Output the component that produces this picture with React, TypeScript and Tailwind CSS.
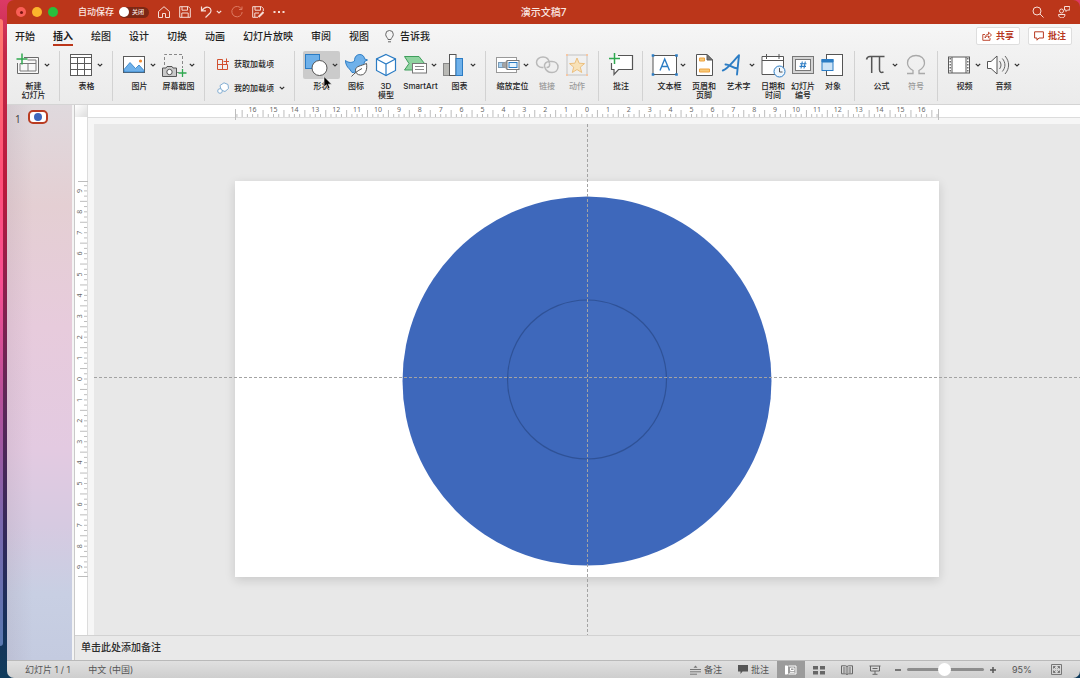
import React from "react";

type Kids = { children: React.ReactNode };

const FONT =
  "font-['Inter','Noto_Sans_CJK_SC',sans-serif]";

function Glyph({ children }: Kids) {
  return (
    <svg viewBox="0 0 22 22" className="size-[22px] shrink-0 overflow-visible" fill="none" stroke="#5a5a5a" strokeWidth="1" aria-hidden="true">
      {children}
    </svg>
  );
}

function Caret({ className = "text-[#333]" }: { className?: string }) {
  return (
    <svg viewBox="0 0 6 4" className={`h-1 w-1.5 shrink-0 ${className}`} fill="none" stroke="currentColor" strokeWidth="1.2" aria-hidden="true">
      <path d="M0.8 0.8 3 3 5.2 0.8" />
    </svg>
  );
}

const GREEN = "#2fa84f";
const BLUE = "#2b7cc4";
const SKY = "#6fb1ea";
const ORANGE = "#f0a340";

const icons = {
  newSlide: (
    <Glyph>
      <path d="M7 3.500H21.500V19.500H.5V9" fill="#f8f8f8" stroke="#6a6a6a" />
      <path d="M3 9.500V17H19V6H10.500M3 9.500H19M11 9.500V17" stroke="#7a7a7a" />
      <path d="M-.5 5H10.500M5 -.5V10.500" stroke={GREEN} strokeWidth="1.500" />
    </Glyph>
  ),
  table: (
    <Glyph>
      <rect x=".5" y=".5" width="21" height="21" fill="#fff" />
      <path d="M.5 3.500h21M.5 9.500h21M.5 15.500h21M7.500 3.500v18M14.500 3.500v18" />
    </Glyph>
  ),
  picture: (
    <Glyph>
      <rect x=".5" y="2.500" width="21" height="16" fill="#fff" />
      <path d="M1 15.500 7 8.500 12.500 14.500 16 11 21 16.500V18H1Z" fill={SKY} stroke={BLUE} strokeWidth=".8" />
      <circle cx="17.500" cy="7" r="1.600" fill="#f08a30" stroke="none" />
    </Glyph>
  ),
  screenshot: (
    <Glyph>
      <path d="M2.500 11V.5h18V14M15 18.500h2" stroke="#888" strokeDasharray="3 2" />
      <path d="M.5 14H4l1-1.500h5l1 1.500h3.500v8.500H.5Z" fill="#c9c9c9" stroke="#555" />
      <circle cx="7.500" cy="18" r="2.700" fill="#fff" stroke="#555" />
      <path d="M16.500 19h8M20.500 15v8" stroke={GREEN} strokeWidth="1.300" />
    </Glyph>
  ),
  shapes: (
    <Glyph>
      <rect x=".5" y=".5" width="14" height="14" fill={SKY} stroke={BLUE} />
      <circle cx="14.500" cy="14" r="7.500" fill="#fff" stroke="#555" />
    </Glyph>
  ),
  iconSet: (
    <Glyph>
      <path d="M.5 6.500C3.500 9 7 9 9.500 7 9.500 2.500 12 .5 14.800.5c2.700 0 4.700 2 4.700 4.300L22.500 6 19.500 7.500C19 13.500 14 18.500 7 18.500L4.500 15C2 13 .5 10 .5 6.500Z" fill={SKY} stroke={BLUE} />
      <path d="M21.500 9.500c1 6-1 11.500-6 11.500-3 0-5-2-5-4.800 0-4.200 5.500-4.200 11-6.700Z" fill="#fff" stroke="#555" />
      <path d="M6.500 22.500C9.500 19 12.500 17 17 14.500" stroke="#555" />
    </Glyph>
  ),
  model: (
    <Glyph>
      <path d="M11 .5 20.500 5v11.500L11 21.500 1.500 16.500V5Z" fill="#fff" stroke={BLUE} strokeWidth="1.200" />
      <path d="M1.500 5 11 10l9.500-5M11 10v11.500" stroke={BLUE} strokeWidth="1.200" />
    </Glyph>
  ),
  smartArt: (
    <Glyph>
      <path d="M.5 2.500H15l5.500 7-5.500 6.500H.5L5 9.500Z" fill="#8fd3a0" stroke="#3f9e5c" />
      <rect x="8.500" y="9.500" width="14" height="9.500" fill="#fff" stroke="#777" />
      <path d="M11 12.500h9M11 15.500h9" stroke="#888" />
    </Glyph>
  ),
  chart: (
    <Glyph>
      <rect x=".5" y="9.500" width="6" height="12" fill="#b9b9b5" stroke="#888" />
      <rect x="6.500" y=".5" width="6.500" height="21" fill="#fff" stroke="#555" />
      <rect x="13" y="4.500" width="6.500" height="17" fill={SKY} stroke={BLUE} />
    </Glyph>
  ),
  zoomTo: (
    <Glyph>
      <rect x=".5" y="3.500" width="20" height="15" fill="#fff" stroke="#999" />
      <rect x="2.500" y="8.500" width="6" height="5" fill="#a9d2f2" stroke="#7a9ab5" />
      <path d="M6.500 9.500 11 7.500v7L6.500 12.500Z" fill="#a5a5a5" stroke="#999" />
      <rect x="11" y="6.500" width="12" height="9" fill="#fff" stroke="#777" />
      <rect x="13" y="8.500" width="8" height="5" fill="#e6f3fc" stroke={BLUE} />
    </Glyph>
  ),
  link: (
    <Glyph>
      <path d="M13.500 9.500C13 5 10.500 3 7 3 3 3 .5 5.500.5 8.300c0 3 2.500 5.200 5.500 5.200h1.500" stroke="#b9b9b9" strokeWidth="1.500" />
      <path d="M8.500 12.500c-.5-3 2-5 5-5h2.500c3.500 0 6 2.400 6 5.500s-2.500 5.500-6 5.500c-3 0-6-1-7.500-6ZM13.500 9.500c.5 2.500-.5 4-3 4" stroke="#b9b9b9" strokeWidth="1.500" />
    </Glyph>
  ),
  action: (
    <Glyph>
      <rect x="1" y="1" width="20" height="20" stroke="#c4c4c4" />
      <path d="M11 4l2.100 5.200 5.400.4-4.200 3.500 1.400 5.400-4.700-3-4.700 3 1.400-5.400-4.200-3.500 5.400-.4Z" fill="#f8e2b8" stroke="#ecc07f" />
      <path d="M0 0h2v2H0ZM20 0h2v2h-2ZM0 20h2v2H0ZM20 20h2v2h-2Z" fill="#f5c7a5" stroke="none" />
    </Glyph>
  ),
  comment: (
    <Glyph>
      <path d="M4 1.500H22.500V15.500H8L3.500 20.500V15.500H1.500V7" fill="#fff" stroke="none" />
      <path d="M8 1.500H22.500V15.500H8.500L4 20.500V15.500H1.500V9" stroke="#555" strokeWidth="1.200" />
      <path d="M-1 4.500H10M4.500 -1V10" stroke={GREEN} strokeWidth="1.500" />
    </Glyph>
  ),
  textBox: (
    <Glyph>
      <rect x="0" y="1.500" width="23.500" height="19" fill="#fff" stroke="#555" />
      <path d="M7 16.500 11.700 5 16.500 16.500M8.700 12.500h6" stroke={BLUE} strokeWidth="1.400" />
      <path d="M-1.300.2h2.600v2.600h-2.600ZM22.200.2h2.600v2.600h-2.600ZM-1.300 19.200h2.600v2.600h-2.600ZM22.200 19.200h2.600v2.600h-2.600Z" fill={BLUE} stroke="none" />
    </Glyph>
  ),
  headerFooter: (
    <Glyph>
      <path d="M3.500.5H14L19.500 6V21.500h-16Z" fill="#fff" stroke="#555" />
      <path d="M14 .5V6h5.500Z" fill="#777" />
      <path d="M6.500 4h5v3h-5ZM6.500 15h10v3h-10Z" fill="#f6c978" stroke={ORANGE} />
    </Glyph>
  ),
  wordArt: (
    <Glyph>
      <path d="M.8 16.500C5 15.500 10 8.500 17 1.200L15 20.500M3.500 10.500C6.500 10 10 13.500 15.500 14.500" stroke={BLUE} strokeWidth="1.900" strokeLinecap="round" strokeLinejoin="round" />
    </Glyph>
  ),
  date: (
    <Glyph>
      <path d="M0 2.500H21.500V20.500H0Z" fill="#fff" stroke="#555" />
      <path d="M0 6.500H21.500M4.500 0V5M17 0V5" stroke="#555" />
      <circle cx="17.500" cy="17.500" r="5.500" fill="#eef6fd" stroke={BLUE} />
      <path d="M17.500 14v4h3" stroke="#555" />
    </Glyph>
  ),
  number: (
    <Glyph>
      <rect x=".5" y="2.500" width="21" height="17" fill="#d4d4d4" stroke="#777" />
      <rect x="3.500" y="5.500" width="15" height="11" fill="#fff" stroke="#777" />
      <path d="M10.300 7.500 9 14.500M13.300 7.500 12 14.500M8 9.700h6.500M7.500 12.400H14" stroke={BLUE} strokeWidth="1.100" />
    </Glyph>
  ),
  object: (
    <Glyph>
      <rect x="4.500" y=".5" width="16" height="21" fill="#fff" stroke="#555" />
      <rect x="0" y="5.500" width="11" height="11" fill="#cde4f7" stroke={BLUE} />
      <path d="M0 5.500h11V8H0Z" fill={BLUE} stroke={BLUE} />
    </Glyph>
  ),
  equation: (
    <Glyph>
      <path d="M1.500 5.500C2 3 3 2.500 5 2.500H19.500M6.700 2.500V19M14.500 2.500V15.500c0 2.500 1.500 3.500 4 2.500" stroke="#555" strokeWidth="1.500" />
    </Glyph>
  ),
  symbol: (
    <Glyph>
      <path d="M2 19.500H8V16.500C4.500 14.500 2.500 12 2.500 9 2.500 4.500 6 1.500 11 1.500S19.500 4.500 19.500 9c0 3-2 5.500-5.500 7.500v3h6" stroke="#a9a9a9" strokeWidth="1.300" />
    </Glyph>
  ),
  video: (
    <Glyph>
      <rect x=".5" y="3" width="21" height="16" fill="#fff" />
      <path d="M4 3v16M18 3v16" />
      <path d="M2.200 4v14M19.800 4v14" strokeDasharray="1.500 1.500" strokeWidth="1.300" />
    </Glyph>
  ),
  audio: (
    <Glyph>
      <path d="M.5 7.500H4L10 2V20L4 14.500H.5Z" fill="#fff" stroke="#555" />
      <path d="M12.500 7c2 2.500 2 5.500 0 8M15.300 4.500c3.500 4 3.500 9 0 13M18 2c4.800 5.500 4.800 12.500 0 18" stroke="#666" />
    </Glyph>
  ),
};

type ToolProps = {
  icon: React.ReactNode;
  lines: string[];
  menu?: boolean;
  muted?: boolean;
  active?: boolean;
  children?: React.ReactNode;
};

function Tool({ icon, lines, menu, muted, active, children }: ToolProps) {
  return (
    <button
      type="button"
      disabled={muted}
      className={`relative flex shrink-0 flex-col items-center pt-[3px] ${menu ? "w-[39px]" : "w-[30px]"} ${muted ? "text-[#9b9b9b]" : "text-[#222]"}`}
    >
      <span className={`flex h-7 items-center gap-[5px] rounded-[2px] ${active ? "bg-[#cbcbcb] px-0.5" : ""}`}>
        {icon}
        {menu && <Caret />}
      </span>
      <span className="mt-[3px] text-[8px] leading-[9px] font-medium whitespace-nowrap">
        {lines.map((line) => (
          <span key={line} className="block">{line}</span>
        ))}
      </span>
      {children}
    </button>
  );
}

function Group({ children }: Kids) {
  return (
    <div className="flex shrink-0 pl-[7px]">
      {children}
      <span className="my-[3px] ml-[6px] w-px bg-[#d2d2d2]" />
    </div>
  );
}

function AddIns() {
  return (
    <div className="flex w-[90px] shrink-0 text-[8px] font-medium whitespace-nowrap text-[#222]">
      <div className="flex flex-1 flex-col gap-2 pt-2 pl-3">
        <button type="button" className="flex h-4 items-center gap-[5px]">
          <svg viewBox="0 0 12 12" className="size-3" fill="none" stroke="#d2502f" aria-hidden="true">
            <path d="M5.500 1.500H.5V11.500H10.500V6.500M.5 6.500H10.500M5.500 1.500V11.500M6.500 3.500H12M9.500.5V6.500" />
          </svg>
          获取加载项
        </button>
        <button type="button" className="flex h-4 items-center gap-[5px]">
          <svg viewBox="0 0 12 12" className="size-3" fill="#fff" stroke="#82add2" aria-hidden="true">
            <path d="M7 .8 11 2.500 11.500 6.500 8 9.500 4 8 3 3.500Z" />
            <circle cx="3" cy="9" r="2.300" />
          </svg>
          我的加载项
          <Caret />
        </button>
      </div>
      <span className="my-[3px] w-px bg-[#d2d2d2]" />
    </div>
  );
}

function Ribbon() {
  return (
    <div className="flex h-[57px] items-stretch border-b border-[#d4d4d4] bg-linear-to-b from-[#f2f2f2] to-[#ebebeb]">
      <Group>
        <Tool icon={icons.newSlide} lines={["新建", "幻灯片"]} menu />
      </Group>
      <Group>
        <Tool icon={icons.table} lines={["表格"]} menu />
      </Group>
      <Group>
        <Tool icon={icons.picture} lines={["图片"]} menu />
        <Tool icon={icons.screenshot} lines={["屏幕截图"]} menu />
      </Group>
      <AddIns />
      <Group>
        <Tool icon={icons.shapes} lines={["形状"]} menu active>
          <svg viewBox="0 0 10 14" className="absolute top-7 left-[21px] z-10 h-3.5 w-2.5" aria-hidden="true">
            <path d="M1 .5V11L3.500 8.800 5.200 12.800 7 12 5.300 8.200H8.700Z" fill="#000" stroke="#fff" strokeWidth=".6" />
          </svg>
        </Tool>
        <Tool icon={icons.iconSet} lines={["图标"]} />
        <Tool icon={icons.model} lines={["3D", "模型"]} />
        <Tool icon={icons.smartArt} lines={["SmartArt"]} menu />
        <Tool icon={icons.chart} lines={["图表"]} menu />
      </Group>
      <Group>
        <Tool icon={icons.zoomTo} lines={["缩放定位"]} menu />
        <Tool icon={icons.link} lines={["链接"]} muted />
        <Tool icon={icons.action} lines={["动作"]} muted />
      </Group>
      <Group>
        <Tool icon={icons.comment} lines={["批注"]} />
      </Group>
      <Group>
        <Tool icon={icons.textBox} lines={["文本框"]} menu />
        <Tool icon={icons.headerFooter} lines={["页眉和", "页脚"]} />
        <Tool icon={icons.wordArt} lines={["艺术字"]} menu />
        <Tool icon={icons.date} lines={["日期和", "时间"]} />
        <Tool icon={icons.number} lines={["幻灯片", "编号"]} />
        <Tool icon={icons.object} lines={["对象"]} />
      </Group>
      <Group>
        <Tool icon={icons.equation} lines={["公式"]} menu />
        <Tool icon={icons.symbol} lines={["符号"]} muted />
      </Group>
      <div className="flex pl-[7px]">
        <Tool icon={icons.video} lines={["视频"]} menu />
        <Tool icon={icons.audio} lines={["音频"]} menu />
      </div>
    </div>
  );
}

function BarIcon({ label, children, dim }: { label: string; children: React.ReactNode; dim?: boolean }) {
  return (
    <button type="button" aria-label={label} className={dim ? "text-[#dd7a62]" : "text-[#f6ddd6]"}>
      <svg viewBox="0 0 12 12" className="size-3" fill="none" stroke="currentColor" aria-hidden="true">
        {children}
      </svg>
    </button>
  );
}

function TitleBar() {
  return (
    <header className="grid h-6 grid-cols-[1fr_auto_1fr] items-center bg-[#bb361a] text-white">
      <div className="flex items-center">
        <div className="flex gap-[6px] pl-[9px]">
          <button type="button" aria-label="关闭窗口" className="flex size-[10px] items-center justify-center rounded-full bg-[#f95f57]">
            <span className="size-[3px] rounded-full bg-[#7a1410]" />
          </button>
          <button type="button" aria-label="最小化" className="size-[10px] rounded-full bg-[#fbb42c]" />
          <button type="button" aria-label="全屏" className="size-[10px] rounded-full bg-[#29bf3c]" />
        </div>
        <label className="ml-5 flex items-center gap-[5px] text-[9px] leading-3 font-medium text-[#fae7e2]">
          自动保存
          <span className="relative flex h-[11px] w-[30px] items-center rounded-full bg-[#7c2714]">
            <input type="checkbox" role="switch" className="absolute inset-0 appearance-none" />
            <span className="size-[10px] rounded-full bg-white" />
            <span className="ml-[3px] text-[6px] leading-2">关闭</span>
          </span>
        </label>
        <div className="ml-[9px] flex items-center gap-[9px]">
          <BarIcon label="主页"><path d="M.5 5.500 6 .7l5.500 4.800V11.500H7.500V7.500h-3v4H.5Z" /></BarIcon>
          <BarIcon label="保存"><path d="M.7.7H9.500L11.300 2.500V11.300H.7ZM3 .7V4.200H8.500V.7M2.800 11.300V7H9.200v4.300" /></BarIcon>
          <div className="flex items-center gap-1">
            <BarIcon label="撤消"><path d="M1.500.5V4.800H6M1.500 4.800C4 1.500 7 .5 9 1.500c2.500 1.300 2.500 4 .8 5.800L5.500 11.500" strokeWidth="1.200" /></BarIcon>
            <Caret className="text-[#f6ddd6]" />
          </div>
          <BarIcon label="恢复" dim><path d="M10.500 3A5.200 5.200 0 1 0 11.200 6M11 .5V3.500H8" /></BarIcon>
          <BarIcon label="另存为"><path d="M6 11.300H.7V.7H9.500L11.300 2.500V5M3 .7V4.200H8.500V.7M2.800 11.300V7H7" /><path d="M6.500 11 11.500 6" strokeWidth="2" /></BarIcon>
          <BarIcon label="更多"><path d="M.5 6h2M5 6h2M9.500 6h2" strokeWidth="2" /></BarIcon>
        </div>
      </div>
      <h1 className="text-[10px] font-medium text-[#fae7e2]">演示文稿7</h1>
      <div className="flex items-center justify-end gap-3.5 pr-2.5">
        <BarIcon label="搜索"><circle cx="5" cy="5" r="4" /><path d="M8 8 11.500 11.500" /></BarIcon>
        <BarIcon label="协作"><circle cx="3.500" cy="5" r="2" /><path d="M.5 8.500H7c0 3-2 3.300-3.300 3.300S.5 11 .5 8.500ZM6.500.5h5.300V4H9.500L8 5.500V4H6.500Z" /></BarIcon>
      </div>
    </header>
  );
}

const tabs = ["开始", "插入", "绘图", "设计", "切换", "动画", "幻灯片放映", "审阅", "视图"];

function TabBar() {
  return (
    <nav className="flex h-6 items-center bg-linear-to-b from-[#f6f6f6] to-[#f2f2f2] pr-2 pl-2 text-[10px] font-medium text-[#1e1e1e]">
      <div className="flex gap-[18px]">
        {tabs.map((tab) => (
          <button
            key={tab}
            type="button"
            className={`h-5 border-b-2 pt-px leading-4 whitespace-nowrap ${tab === "插入" ? "border-[#bb361a] font-bold" : "border-transparent"}`}
          >
            {tab}
          </button>
        ))}
      </div>
      <button type="button" className="ml-4 flex items-center gap-1.5 whitespace-nowrap">
        <svg viewBox="0 0 9 13" className="h-[13px] w-[9px]" fill="none" stroke="#666" aria-hidden="true">
          <path d="M3 9.500C3 8 .7 7 .7 4.300a3.800 3.800 0 0 1 7.600 0C8.300 7 6 8 6 9.500ZM3 11.800h3" />
        </svg>
        告诉我
      </button>
      <div className="ml-auto flex gap-2 text-[9px] font-bold text-[#b8391f]">
        <button type="button" className="flex h-[18px] w-11 items-center justify-center gap-1 rounded-[2px] border border-[#dedede] bg-white">
          <svg viewBox="0 0 10 10" className="size-2.5" fill="none" stroke="currentColor" strokeWidth=".9" aria-hidden="true">
            <path d="M3 3.500H.8V9.300H8V7M3 7c.2-2.500 1.500-3.700 3.500-3.700V1.200L9.500 4 6.500 6.800V5C5 5 4 5.500 3 7Z" />
          </svg>
          共享
        </button>
        <button type="button" className="flex h-[18px] w-11 items-center justify-center gap-1 rounded-[2px] border border-[#dedede] bg-white">
          <svg viewBox="0 0 10 10" className="size-2.5" fill="none" stroke="currentColor" aria-hidden="true">
            <path d="M.6.8H9.400V7H5L3 9.200V7H.6Z" />
          </svg>
          批注
        </button>
      </div>
    </nav>
  );
}

const STEP = 20.9;

function range(max: number) {
  return Array.from({ length: max * 2 + 1 }, (_, i) => i - max);
}

function HorizontalRuler() {
  return (
    <svg viewBox="0 0 704 15" className="mx-auto block w-[71.4%] overflow-visible font-['Noto_Sans']" aria-hidden="true">
      {range(67).map((n) => (
        <path
          key={n}
          d={`M${352 + (n * STEP) / 4} ${Math.abs(n) % 4 === 2 ? 5 : 9}V12`}
          stroke="#bdbdbd"
        />
      ))}
      <path d="M.5 4V15M703.500 4V15" stroke="#bdbdbd" />
      {range(16).map((n) => (
        <text key={n} x={352 + n * STEP} y="7" textAnchor="middle" fontSize="7" fill="#6a6a6a">
          {Math.abs(n)}
        </text>
      ))}
    </svg>
  );
}

function VerticalRuler() {
  return (
    <svg viewBox="0 0 15 396" className="w-[15px] shrink-0 overflow-visible font-['Noto_Sans']" aria-hidden="true">
      {range(37).map((n) => (
        <path key={n} d={`M${Math.abs(n) % 4 === 2 ? 5 : 9} ${198 + (n * STEP) / 4}H12`} stroke="#bdbdbd" />
      ))}
      <path d="M3 .5H15M3 395.500H15" stroke="#bdbdbd" />
      {range(9).map((n) => (
        <text
          key={n}
          transform={`translate(7 ${198 + n * STEP}) rotate(-90)`}
          textAnchor="middle"
          fontSize="7"
          fill="#6a6a6a"
        >
          {Math.abs(n)}
        </text>
      ))}
    </svg>
  );
}

function Canvas() {
  return (
    <div className="relative flex flex-1 items-center justify-center bg-[#e8e8e8] pb-0.5">
      <div className="w-[71.4%] bg-white shadow-[0_3px_10px_rgba(0,0,0,0.14)]">
        <svg viewBox="0 0 704 396" className="block w-full" role="img" aria-label="同心圆">
          <circle cx="352" cy="200" r="184.500" fill="#3e68bb" />
          <circle cx="352" cy="198.500" r="79.500" fill="none" stroke="#2f5297" strokeWidth="1.200" />
        </svg>
      </div>
      <span className="absolute inset-y-0 left-1/2 w-px bg-[repeating-linear-gradient(to_bottom,#a3a3a3_0_3px,transparent_3px_5px)]" />
      <span className="absolute inset-x-0 top-1/2 h-px -translate-y-[3px] bg-[repeating-linear-gradient(to_right,#a3a3a3_0_3px,transparent_3px_5px)]" />
    </div>
  );
}

function Workspace() {
  return (
    <div className="flex flex-1">
      <aside className="w-[65px] shrink-0 bg-[linear-gradient(to_right,rgba(120,90,110,0.1),transparent_40%),linear-gradient(to_bottom,#dfd9dd,#e4cfd3_18%,#e7cbdc_40%,#e3cae1_62%,#d6cae1_76%,#c8cfe3_88%,#c4cbe0)]">
        <button type="button" className="flex items-start pt-[5px] pl-2" aria-label="幻灯片 1">
          <span className="mt-[3px] w-[13px] text-left font-['Noto_Sans'] text-[10px] leading-3 text-[#444]">1</span>
          <span className="flex h-[14px] w-5 items-center justify-center rounded-[5px] border-2 border-[#b93c22] bg-white">
            <span className="size-2 rounded-full bg-[#3e68bb]" />
          </span>
        </button>
      </aside>
      <div className="w-[3px] border-r border-[#c9c9c9] bg-[#f4f4f4]" />
      <div className="flex min-w-0 flex-1 flex-col">
        <div className="flex flex-1">
          <div className="flex w-[13px] shrink-0 flex-col border-r border-[#dcdcdc] bg-white">
            <div className="h-3 bg-linear-to-br from-white to-[#dedede]" />
            <div className="flex flex-1 items-center pt-[5px]">
              <VerticalRuler />
            </div>
          </div>
          <div className="flex min-w-0 flex-1 flex-col bg-[#f6f6f6]">
            <div className="h-[13px] border-b border-[#dcdcdc] bg-white pl-1.5">
              <HorizontalRuler />
            </div>
            <div className="flex flex-1 pt-1.5 pl-1.5">
              <Canvas />
            </div>
          </div>
        </div>
        <div className="h-[25px] border-t border-[#d2d2d2] bg-[#e9e9e9]">
          <input
            aria-label="备注"
            placeholder="单击此处添加备注"
            className="block h-[22px] w-full bg-transparent px-1.5 text-[10px] font-medium outline-none placeholder:text-[#2c2c2c]"
          />
        </div>
      </div>
    </div>
  );
}

function ViewButton({ label, active, children }: { label: string; active?: boolean; children: React.ReactNode }) {
  return (
    <button
      type="button"
      aria-label={label}
      className={`flex w-7 items-center justify-center self-stretch ${active ? "bg-[#9b9b9b] text-white" : "text-[#666]"}`}
    >
      <svg viewBox="0 0 12 10" className="h-2.5 w-3" fill="none" stroke="currentColor" aria-hidden="true">
        {children}
      </svg>
    </button>
  );
}

function StatusBar() {
  return (
    <footer className="flex h-[18px] items-center border-t border-[#b9b9b9] bg-linear-to-b from-[#e0e0e0] to-[#cecece] text-[9px] text-[#555]">
      <span className="pl-[18px]">幻灯片 1 / 1</span>
      <button type="button" className="ml-[18px]">中文 (中国)</button>
      <div className="ml-auto flex items-center self-stretch">
        <button type="button" className="flex items-center gap-[3px]">
          <svg viewBox="0 0 11 10" className="h-2.5 w-[11px]" stroke="#777" fill="#777" aria-hidden="true">
            <path d="M0 4.500H11M0 6.800H11M0 9.200H7" fill="none" />
            <path d="M5.500 .5 7.500 2.800h-4Z" stroke="none" />
          </svg>
          备注
        </button>
        <button type="button" className="mr-2 ml-4 flex items-center gap-[3px]">
          <svg viewBox="0 0 10 9" className="h-[9px] w-2.5" fill="#555" aria-hidden="true">
            <path d="M0 0H10V6.500H4.500L2.500 9V6.500H0Z" />
          </svg>
          批注
        </button>
        <ViewButton label="普通视图" active>
          <path d="M0 1H2.500V9H0Z" fill="currentColor" />
          <path d="M3.500 1H11V9H3.500M5.500 3H9V5.500H5.500ZM5 7.300H9.500" />
        </ViewButton>
        <ViewButton label="幻灯片浏览">
          <path d="M0 1h5v3.500H0ZM7 1h5v3.500H7ZM0 6h5v3.500H0ZM7 6h5v3.500H7Z" fill="currentColor" stroke="none" />
        </ViewButton>
        <ViewButton label="阅读视图">
          <path d="M.5.8H4.500L6 1.500 7.500.8h4V8.800H7.500L6 9.500 4.500 8.800H.5ZM6 1.500V9.500M2 3h2.500M2 5h2.500M2 7h2.500M7.500 3H10M7.500 5H10M7.500 7H10" />
        </ViewButton>
        <ViewButton label="幻灯片放映">
          <path d="M.5 1H11.500M1.500 1V6H10.500V1M6 6V9M3.500 9.300H8.500M3.500 3.500h5" />
        </ViewButton>
        <button type="button" aria-label="缩小" className="flex w-[18px] justify-center">
          <svg viewBox="0 0 6 6" className="size-1.5" stroke="#555" strokeWidth="1.500" aria-hidden="true"><path d="M0 3h6" /></svg>
        </button>
        <input
          type="range"
          aria-label="缩放"
          min={0}
          max={100}
          defaultValue={48}
          className="h-3 w-[77px] appearance-none bg-transparent [&::-webkit-slider-runnable-track]:h-[3px] [&::-webkit-slider-runnable-track]:rounded-full [&::-webkit-slider-runnable-track]:bg-[#8d8d8d] [&::-webkit-slider-thumb]:-mt-[5px] [&::-webkit-slider-thumb]:size-[13px] [&::-webkit-slider-thumb]:appearance-none [&::-webkit-slider-thumb]:rounded-full [&::-webkit-slider-thumb]:bg-white"
        />
        <button type="button" aria-label="放大" className="flex w-[18px] justify-center">
          <svg viewBox="0 0 6 6" className="size-1.5" stroke="#555" strokeWidth="1.500" aria-hidden="true"><path d="M0 3h6M3 0v6" /></svg>
        </button>
        <span className="ml-2.5 w-[39px]">95%</span>
        <button type="button" aria-label="适应窗口大小" className="mr-[18px]">
          <svg viewBox="0 0 11 11" className="size-[11px]" fill="none" stroke="#777" aria-hidden="true">
            <path d="M.5.5H10.500V10.500H.5ZM2.500 4.500V2.500h2M2.500 2.500 4.500 4.500M8.500 4.500V2.500h-2M8.500 2.500 6.500 4.500M2.500 6.500V8.500h2M2.500 8.500 4.500 6.500M8.500 6.500V8.500h-2M8.500 8.500 6.500 6.500" />
          </svg>
        </button>
      </div>
    </footer>
  );
}

export default function App() {
  return (
    <div className={`flex min-h-screen bg-[linear-gradient(to_bottom,#dc3a66,#c22848_8%,#b8193c_28%,#8c1f4c_42%,#5a2858_60%,#30285a_80%,#17305a_92%,#103c5c)] ${FONT}`}>
      <div className="flex w-[7px] shrink-0 pt-[19px] pb-8">
        <div className="w-[3px] rounded-r-md bg-[linear-gradient(to_bottom,#ff7a6e,#ff4f78_25%,#f94f92_42%,#b8509a_60%,#7a68ae_80%,#5a78b0)]" />
      </div>
      <main className="flex min-w-0 flex-1 flex-col overflow-hidden rounded-[7px]">
        <TitleBar />
        <TabBar />
        <Ribbon />
        <Workspace />
        <StatusBar />
      </main>
    </div>
  );
}
